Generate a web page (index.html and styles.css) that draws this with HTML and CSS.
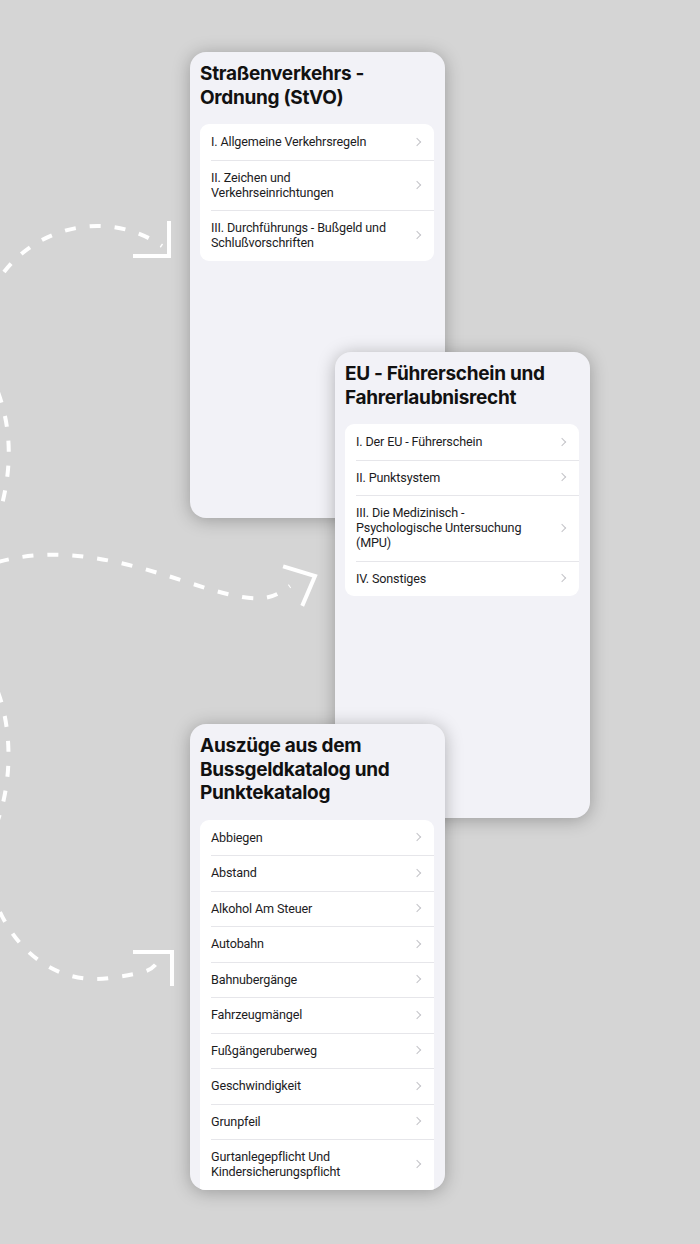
FILE: index.html
```html
<!DOCTYPE html>
<html lang="de">

<head>
    <meta charset="UTF-8">
    <meta name="viewport" content="width=device-width, initial-scale=1.0">
    <title>Verkehrsrecht</title>
    <link rel="stylesheet" href="styles.css">
</head>

<body>
    <div class="canvas">
        <svg class="arrows" width="700" height="1244" viewBox="0 0 700 1244">
            <g class="dash">
                <path d="M4 272 C 40 225, 110 210, 162 246" />
                <path d="M-2 392 C 12 430, 12 470, 0 512" />
                <path d="M-2 562 C 60 545, 120 560, 190 583 S 270 600, 290 586" />
                <path d="M-2 692 C 12 730, 12 780, -2 820" />
                <path d="M0 912 C 20 955, 60 985, 110 978 S 150 968, 162 958" />
            </g>
            <g class="head">
                <path d="M169 223 L169 256 L135 256" />
                <path d="M285 567 L315 576 L303 604" />
                <path d="M135 952 L172 952 L172 984" />
            </g>
        </svg>

        <div class="card card-stvo">
            <h2 class="title">Straßenverkehrs - Ordnung (StVO)</h2>
            <ul class="group">
                <li class="row">I. Allgemeine Verkehrsregeln</li>
                <li class="row">II. Zeichen und<br>Verkehrseinrichtungen</li>
                <li class="row">III. Durchführungs - Bußgeld und Schlußvorschriften</li>
            </ul>
        </div>

        <div class="card card-eu">
            <h2 class="title">EU - Führerschein und Fahrerlaubnisrecht</h2>
            <ul class="group">
                <li class="row">I. Der EU - Führerschein</li>
                <li class="row">II. Punktsystem</li>
                <li class="row">III. Die Medizinisch -<br>Psychologische Untersuchung (MPU)</li>
                <li class="row">IV. Sonstiges</li>
            </ul>
        </div>

        <div class="card card-bussgeld">
            <h2 class="title">Auszüge aus dem Bussgeldkatalog und Punktekatalog</h2>
            <ul class="group">
                <li class="row">Abbiegen</li>
                <li class="row">Abstand</li>
                <li class="row">Alkohol Am Steuer</li>
                <li class="row">Autobahn</li>
                <li class="row">Bahnubergänge</li>
                <li class="row">Fahrzeugmängel</li>
                <li class="row">Fußgängeruberweg</li>
                <li class="row">Geschwindigkeit</li>
                <li class="row">Grunpfeil</li>
                <li class="row">Gurtanlegepflicht Und<br>Kindersicherungspflicht</li>
                <li class="row">Halt Und Parkverbot</li>
            </ul>
        </div>
    </div>
</body>

</html>
```

FILE: styles.css
```css
* {
    margin: 0;
    padding: 0;
    list-style: none;
    box-sizing: border-box;
}

body {
    background: #d5d5d5;
    font-family: Inter, "Noto Sans", sans-serif;
    color: #111;
}

.canvas {
    width: 700px;
    height: 1244px;
    position: relative;
    overflow: hidden;
}

.arrows {
    position: absolute;
    left: 0;
    top: 0;
}

.arrows path {
    fill: none;
    stroke: #fff;
    stroke-width: 4;
}

.dash path {
    stroke-dasharray: 11 14;
}

.head path {
    stroke-linecap: square;
    stroke-linejoin: miter;
}

.card {
    position: absolute;
    width: 255px;
    height: 466px;
    background: #f2f2f7;
    border-radius: 16px;
    padding: 10px 11px 0 10px;
    overflow: hidden;
    box-shadow: 0 2px 18px rgba(0, 0, 0, .28);
}

.card-stvo {
    left: 190px;
    top: 52px;
}

.card-eu {
    left: 335px;
    top: 352px;
}

.card-bussgeld {
    left: 190px;
    top: 724px;
}

.title {
    font-size: 19px;
    font-weight: 700;
    line-height: 23.5px;
    letter-spacing: -.3px;
    margin-bottom: 15px;
}

.group {
    background: #fff;
    border-radius: 9px;
}

.row {
    position: relative;
    padding: 10.25px 30px 10.25px 11px;
    font-family: Roboto, "Noto Sans", sans-serif;
    font-size: 12.6px;
    line-height: 15px;
    letter-spacing: -.15px;
    color: #1c1c1e;
}

.row + .row::before {
    content: "";
    position: absolute;
    left: 11px;
    right: 0;
    top: 0;
    border-top: 1px solid #e6e6ea;
}

.row::after {
    content: "";
    position: absolute;
    right: 14px;
    top: 50%;
    width: 5px;
    height: 5px;
    border-top: 1.3px solid #c4c4c8;
    border-right: 1.3px solid #c4c4c8;
    transform: translateY(-50%) rotate(45deg);
}
```
